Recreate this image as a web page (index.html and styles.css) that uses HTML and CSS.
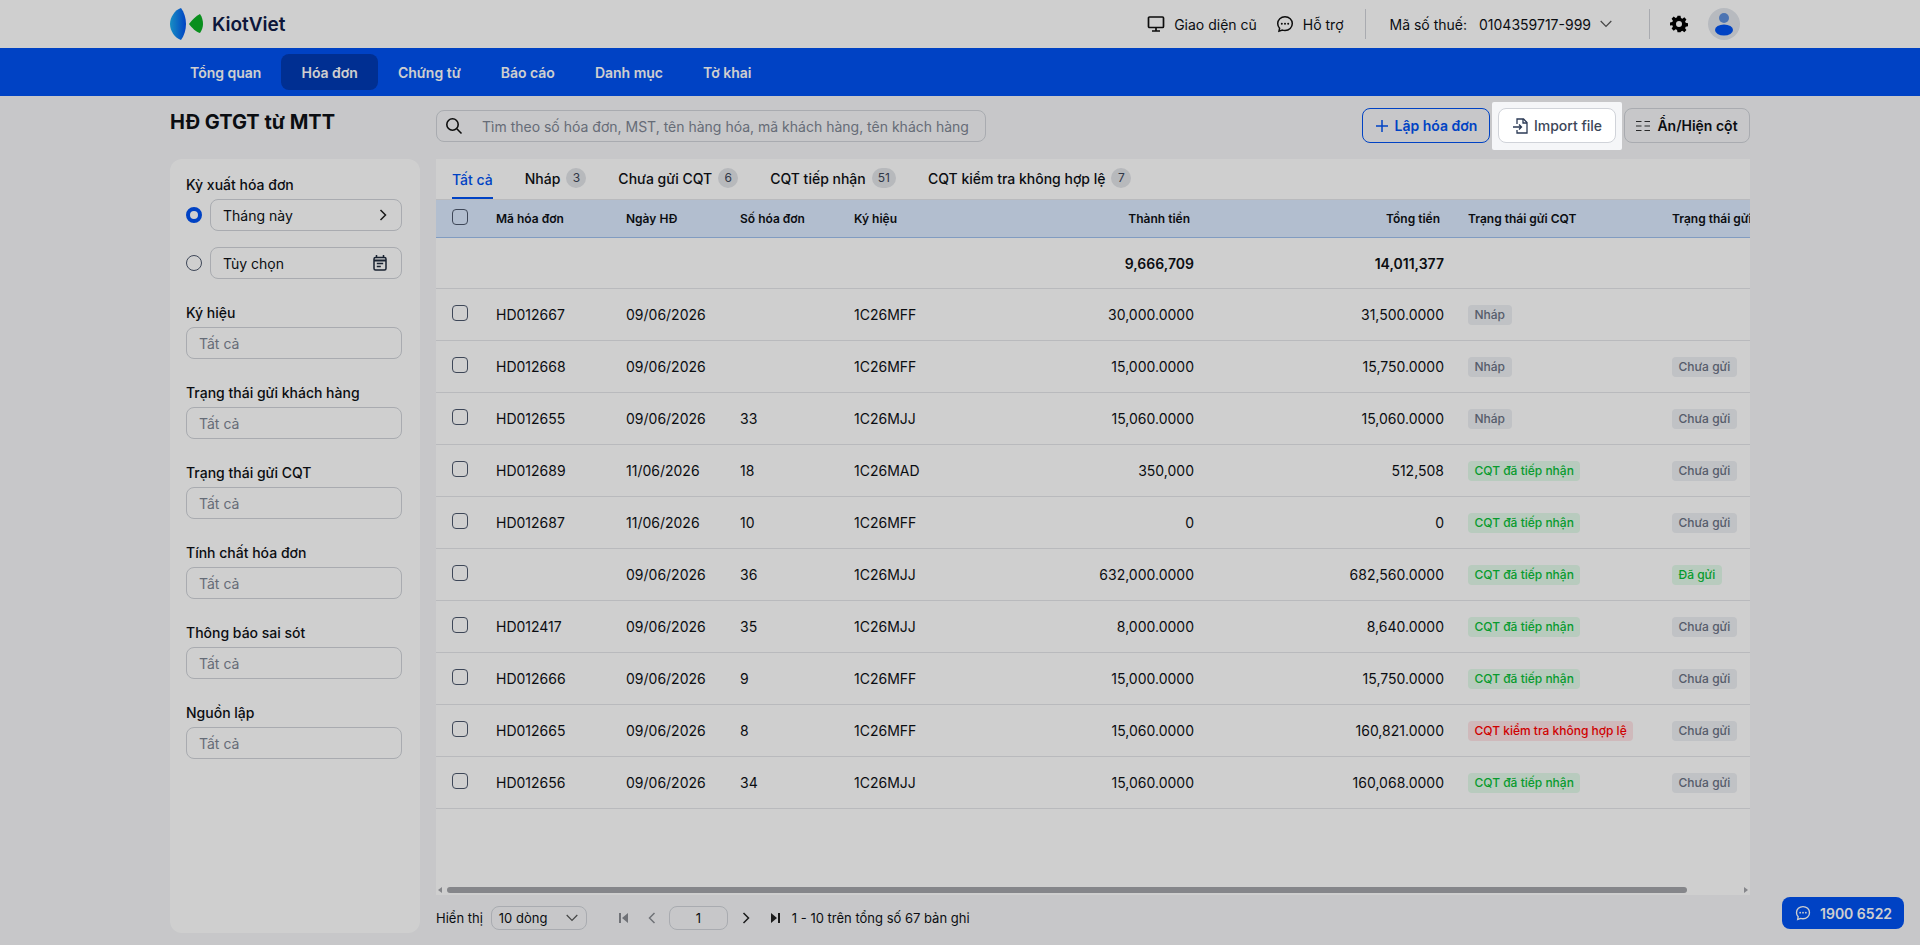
FILE: index.html
```html
<!DOCTYPE html>
<html lang="en">
<head>
    <meta charset="UTF-8">
    <meta name="viewport" content="width=device-width, initial-scale=1.0">
    <title>KiotViet - HĐ GTGT từ MTT</title>
    <link rel="stylesheet" href="styles.css">
</head>
<body>
    <header class="topbar">
        <div class="container topbar-inner">
            <div class="logo">
                <svg width="34" height="32" viewBox="0 0 34 32">
                    <defs>
                        <linearGradient id="lens" x1="0" y1="0" x2="1" y2="0">
                            <stop offset="0" stop-color="#1fb0f0"/>
                            <stop offset="1" stop-color="#0052f2"/>
                        </linearGradient>
                    </defs>
                    <path d="M11 0C5 2 0 9 0 16c0 7 5 14 11 16 3-4 5-10 5-16S14 4 11 0z" fill="url(#lens)"/>
                    <path d="M30 6c-4 2-8 6-11 10 3 4 7 8 11 9 2-3 3-6 3-9 0-4-1-7-3-10z" fill="#0cb024"/>
                </svg>
                <span class="logo-text">KiotViet</span>
            </div>
            <div class="topbar-right">
                <a class="top-link">
                    <svg class="icon-18" viewBox="0 0 18 18" fill="none" stroke="#111" stroke-width="1.700"><rect x="1.500" y="2" width="15" height="10.500" rx="1"/><path d="M9 12.500V16M5 16h8"/></svg>
                    Giao diện cũ
                </a>
                <a class="top-link">
                    <svg class="icon-18" viewBox="0 0 18 18" fill="none" stroke="#111" stroke-width="1.500"><path d="M9 1.800c-4.200 0-7.300 3-7.300 6.800 0 1.800.7 3.400 1.900 4.600L3 16.200l3.400-1.100c.8.300 1.700.4 2.600.4 4.200 0 7.300-3 7.300-6.900S13.200 1.800 9 1.800z"/><circle cx="5.800" cy="8.700" r="1" fill="#111" stroke="none"/><circle cx="9" cy="8.700" r="1" fill="#111" stroke="none"/><circle cx="12.200" cy="8.700" r="1" fill="#111" stroke="none"/></svg>
                    Hỗ trợ
                </a>
                <span class="top-divider"></span>
                <div class="tax-code">
                    <span>Mã số thuế:</span>
                    <span>0104359717-999</span>
                    <svg class="tax-chevron" width="12" height="8" viewBox="0 0 12 8" fill="none" stroke="#555" stroke-width="1.200"><path d="M.7 1l5.300 5.500L11.300 1"/></svg>
                </div>
                <span class="top-divider"></span>
                <svg class="gear" width="18" height="18" viewBox="0 0 24 24"><path fill="#000" fill-rule="evenodd" d="M10 1h4l.6 3.100 1.900.8 2.600-1.800 2.800 2.800-1.800 2.600.8 1.900 3.100.6v4l-3.100.6-.8 1.900 1.800 2.600-2.800 2.800-2.600-1.800-1.900.8L14 23h-4l-.6-3.100-1.900-.8-2.600 1.800-2.800-2.800 1.800-2.600-.8-1.900L0 14v-4l3.100-.6.8-1.900-1.800-2.600 2.800-2.800 2.600 1.800 1.900-.8L10 1zm2 7a4 4 0 1 0 0 8 4 4 0 0 0 0-8z"/></svg>
                <div class="avatar">
                    <svg width="20" height="24" viewBox="0 0 20 24"><circle cx="10" cy="6" r="5" fill="#5f8fdc"/><ellipse cx="10" cy="18" rx="9" ry="5.500" fill="#0052f2"/></svg>
                </div>
            </div>
        </div>
    </header>

    <nav class="navbar">
        <div class="container nav-inner">
            <a class="nav-item">Tổng quan</a>
            <a class="nav-item active">Hóa đơn</a>
            <a class="nav-item">Chứng từ</a>
            <a class="nav-item">Báo cáo</a>
            <a class="nav-item">Danh mục</a>
            <a class="nav-item">Tờ khai</a>
        </div>
    </nav>

    <div class="container">
        <div class="toolbar">
            <h1 class="page-title">HĐ GTGT từ MTT</h1>
            <div class="search-box">
                <svg width="18" height="18" viewBox="0 0 18 18" fill="none" stroke="#111" stroke-width="1.600"><circle cx="7.500" cy="7.500" r="5.700"/><path d="M11.800 11.800L16.500 16.500"/></svg>
                <span class="search-placeholder">Tìm theo số hóa đơn, MST, tên hàng hóa, mã khách hàng, tên khách hàng</span>
            </div>
            <div class="toolbar-actions">
                <button class="btn btn-primary">
                    <svg width="14" height="14" viewBox="0 0 14 14" fill="none" stroke="#0052f2" stroke-width="1.500"><path d="M7 1v12M1 7h12"/></svg>
                    Lập hóa đơn
                </button>
                <button class="btn btn-import">
                    <svg width="18" height="18" viewBox="0 0 18 18" fill="none" stroke="#2b3a55" stroke-width="1.300"><path d="M5 7V2h6.500L15 5.500V16H5v-3"/><path d="M11 2v4h4"/><path d="M1 10h8M7 7.500L9.500 10 7 12.500"/></svg>
                    Import file
                </button>
                <button class="btn btn-columns">
                    <svg width="14" height="12" viewBox="0 0 14 12" fill="none" stroke="#333" stroke-width="1.100"><path d="M0 1.500h5.500M8.500 1.500H14M0 6h5.500M8.500 6H14M0 10.500h5.500M8.500 10.500H14"/></svg>
                    Ẩn/Hiện cột
                </button>
            </div>
        </div>

        <div class="content">
            <aside class="sidebar">
                <div class="filter-period">
                    <label class="filter-label">Kỳ xuất hóa đơn</label>
                    <div class="period-row">
                        <span class="radio checked"></span>
                        <div class="field period-field">
                            Tháng này
                            <svg width="8" height="12" viewBox="0 0 8 12" fill="none" stroke="#222" stroke-width="1.500"><path d="M1.500 1L6.500 6 1.500 11"/></svg>
                        </div>
                    </div>
                    <div class="period-row">
                        <span class="radio"></span>
                        <div class="field period-field">
                            Tùy chọn
                            <svg width="14" height="16" viewBox="0 0 14 16" fill="none" stroke="#1f2a3d" stroke-width="1.500"><rect x="1" y="2.500" width="12" height="12.500" rx="1.500"/><path d="M1 5.500h12" stroke-width="2"/><path d="M3.500 0v3M10.500 0v3M3.800 8.500h6.400M3.800 11.500h4"/></svg>
                        </div>
                    </div>
                </div>
                <div class="filter-group">
                    <label class="filter-label">Ký hiệu</label>
                    <div class="field placeholder">Tất cả</div>
                </div>
                <div class="filter-group">
                    <label class="filter-label">Trạng thái gửi khách hàng</label>
                    <div class="field placeholder">Tất cả</div>
                </div>
                <div class="filter-group">
                    <label class="filter-label">Trạng thái gửi CQT</label>
                    <div class="field placeholder">Tất cả</div>
                </div>
                <div class="filter-group">
                    <label class="filter-label">Tính chất hóa đơn</label>
                    <div class="field placeholder">Tất cả</div>
                </div>
                <div class="filter-group">
                    <label class="filter-label">Thông báo sai sót</label>
                    <div class="field placeholder">Tất cả</div>
                </div>
                <div class="filter-group">
                    <label class="filter-label">Nguồn lập</label>
                    <div class="field placeholder">Tất cả</div>
                </div>
            </aside>

            <main class="main">
                <div class="panel">
                    <div class="tabs">
                        <a class="tab active">Tất cả</a>
                        <a class="tab">Nháp <span class="count">3</span></a>
                        <a class="tab">Chưa gửi CQT <span class="count">6</span></a>
                        <a class="tab">CQT tiếp nhận <span class="count">51</span></a>
                        <a class="tab">CQT kiểm tra không hợp lệ <span class="count">7</span></a>
                    </div>
                    <div class="table-wrap">
                        <table class="invoice-table">
                            <colgroup>
                                <col class="col-check"><col class="col-code"><col class="col-date"><col class="col-no">
                                <col class="col-symbol"><col class="col-amount"><col class="col-total"><col class="col-cqt"><col class="col-customer">
                            </colgroup>
                            <thead>
                                <tr>
                                    <th><span class="checkbox"></span></th>
                                    <th>Mã hóa đơn</th>
                                    <th>Ngày HĐ</th>
                                    <th>Số hóa đơn</th>
                                    <th>Ký hiệu</th>
                                    <th class="num">Thành tiền</th>
                                    <th class="num">Tổng tiền</th>
                                    <th>Trạng thái gửi CQT</th>
                                    <th>Trạng thái gửi khách hàng</th>
                                </tr>
                            </thead>
                            <tbody>
                                <tr class="sum-row">
                                    <td></td><td></td><td></td><td></td><td></td>
                                    <td class="num">9,666,709</td>
                                    <td class="num">14,011,377</td>
                                    <td></td><td></td>
                                </tr>
                                <tr>
                                    <td><span class="checkbox"></span></td><td>HD012667</td><td>09/06/2026</td><td></td><td>1C26MFF</td>
                                    <td class="num">30,000.0000</td><td class="num">31,500.0000</td>
                                    <td><span class="tag tag-gray">Nháp</span></td><td></td>
                                </tr>
                                <tr>
                                    <td><span class="checkbox"></span></td><td>HD012668</td><td>09/06/2026</td><td></td><td>1C26MFF</td>
                                    <td class="num">15,000.0000</td><td class="num">15,750.0000</td>
                                    <td><span class="tag tag-gray">Nháp</span></td><td><span class="tag tag-gray">Chưa gửi</span></td>
                                </tr>
                                <tr>
                                    <td><span class="checkbox"></span></td><td>HD012655</td><td>09/06/2026</td><td>33</td><td>1C26MJJ</td>
                                    <td class="num">15,060.0000</td><td class="num">15,060.0000</td>
                                    <td><span class="tag tag-gray">Nháp</span></td><td><span class="tag tag-gray">Chưa gửi</span></td>
                                </tr>
                                <tr>
                                    <td><span class="checkbox"></span></td><td>HD012689</td><td>11/06/2026</td><td>18</td><td>1C26MAD</td>
                                    <td class="num">350,000</td><td class="num">512,508</td>
                                    <td><span class="tag tag-green">CQT đã tiếp nhận</span></td><td><span class="tag tag-gray">Chưa gửi</span></td>
                                </tr>
                                <tr>
                                    <td><span class="checkbox"></span></td><td>HD012687</td><td>11/06/2026</td><td>10</td><td>1C26MFF</td>
                                    <td class="num">0</td><td class="num">0</td>
                                    <td><span class="tag tag-green">CQT đã tiếp nhận</span></td><td><span class="tag tag-gray">Chưa gửi</span></td>
                                </tr>
                                <tr>
                                    <td><span class="checkbox"></span></td><td></td><td>09/06/2026</td><td>36</td><td>1C26MJJ</td>
                                    <td class="num">632,000.0000</td><td class="num">682,560.0000</td>
                                    <td><span class="tag tag-green">CQT đã tiếp nhận</span></td><td><span class="tag tag-green">Đã gửi</span></td>
                                </tr>
                                <tr>
                                    <td><span class="checkbox"></span></td><td>HD012417</td><td>09/06/2026</td><td>35</td><td>1C26MJJ</td>
                                    <td class="num">8,000.0000</td><td class="num">8,640.0000</td>
                                    <td><span class="tag tag-green">CQT đã tiếp nhận</span></td><td><span class="tag tag-gray">Chưa gửi</span></td>
                                </tr>
                                <tr>
                                    <td><span class="checkbox"></span></td><td>HD012666</td><td>09/06/2026</td><td>9</td><td>1C26MFF</td>
                                    <td class="num">15,000.0000</td><td class="num">15,750.0000</td>
                                    <td><span class="tag tag-green">CQT đã tiếp nhận</span></td><td><span class="tag tag-gray">Chưa gửi</span></td>
                                </tr>
                                <tr>
                                    <td><span class="checkbox"></span></td><td>HD012665</td><td>09/06/2026</td><td>8</td><td>1C26MFF</td>
                                    <td class="num">15,060.0000</td><td class="num">160,821.0000</td>
                                    <td><span class="tag tag-red">CQT kiểm tra không hợp lệ</span></td><td><span class="tag tag-gray">Chưa gửi</span></td>
                                </tr>
                                <tr>
                                    <td><span class="checkbox"></span></td><td>HD012656</td><td>09/06/2026</td><td>34</td><td>1C26MJJ</td>
                                    <td class="num">15,060.0000</td><td class="num">160,068.0000</td>
                                    <td><span class="tag tag-green">CQT đã tiếp nhận</span></td><td><span class="tag tag-gray">Chưa gửi</span></td>
                                </tr>
                            </tbody>
                        </table>
                    </div>
                    <div class="scrollbar">
                        <span class="arrow-left"></span>
                        <span class="thumb"></span>
                        <span class="arrow-right"></span>
                    </div>
                </div>

                <div class="pager">
                    <span>Hiển thị</span>
                    <div class="page-size">
                        10 dòng
                        <svg width="12" height="8" viewBox="0 0 12 8" fill="none" stroke="#555" stroke-width="1.200"><path d="M.7 1l5.300 5.500L11.300 1"/></svg>
                    </div>
                    <div class="page-nav">
                        <svg class="first" width="10" height="10" viewBox="0 0 10 10" fill="#8a8d93"><path d="M0 0h2v10H0zM9 0v10L3 5z"/></svg>
                        <svg class="prev" width="8" height="12" viewBox="0 0 8 12" fill="none" stroke="#8a8d93" stroke-width="1.500"><path d="M6.500 1L1.500 6l5 5"/></svg>
                        <div class="page-input">1</div>
                        <svg class="next" width="8" height="12" viewBox="0 0 8 12" fill="none" stroke="#222" stroke-width="1.500"><path d="M1.500 1l5 5-5 5"/></svg>
                        <svg class="last" width="10" height="10" viewBox="0 0 10 10" fill="#222"><path d="M1 0v10l6-5zM8 0h2v10H8z"/></svg>
                    </div>
                    <span class="page-info">1 - 10 trên tổng số 67 bản ghi</span>
                </div>
            </main>
        </div>
    </div>

    <a class="hotline">
        <svg width="16" height="16" viewBox="0 0 18 18" fill="none" stroke="#fff" stroke-width="1.500"><path d="M9 1.800c-4.200 0-7.300 3-7.300 6.800 0 1.800.7 3.400 1.900 4.600L3 16.200l3.400-1.100c.8.300 1.700.4 2.600.4 4.200 0 7.300-3 7.300-6.900S13.200 1.800 9 1.800z"/><circle cx="5.800" cy="8.700" r="1" fill="#fff" stroke="none"/><circle cx="9" cy="8.700" r="1" fill="#fff" stroke="none"/><circle cx="12.200" cy="8.700" r="1" fill="#fff" stroke="none"/></svg>
        1900 6522
    </a>

    <!-- tour overlay: dims everything except the Import file button -->
    <div class="spotlight"></div>
</body>
</html>
```

FILE: styles.css
```css
:root {
    --primary: #0052f2;
    --primary-dark: #003ab4;
    --background: #f5f6f8;
    --card: #ffffff;
    --text: #0e1116;
    --border: #d0d3d9;
    --line: #e4e6e9;
    --muted: #7e8593;
}

* {
    margin: 0;
    padding: 0;
    box-sizing: border-box;
}

body {
    background-color: var(--background);
    color: var(--text);
    font-family: Inter, "Noto Sans", sans-serif;
    font-size: 14px;
    height: 945px;
    overflow: hidden;
}

.container {
    width: 1580px;
    margin: 0 auto;
}

/* Top bar */
.topbar {
    height: 48px;
    background-color: var(--card);
}

.topbar-inner {
    height: 100%;
    display: flex;
    align-items: center;
    justify-content: space-between;
}

.logo {
    display: flex;
    align-items: center;
    gap: 8px;
}

.logo-text {
    font-size: 19px;
    font-weight: 600;
    color: #101c48;
}

.topbar-right {
    display: flex;
    align-items: center;
    padding-right: 10px;
}

.top-link {
    display: flex;
    align-items: center;
    gap: 9px;
    margin-right: 19px;
}

.icon-18 {
    width: 18px;
    height: 18px;
}

.top-divider {
    width: 1px;
    height: 30px;
    background-color: var(--border);
    margin-left: 2px;
}

.tax-code {
    display: flex;
    align-items: center;
    gap: 12px;
    margin-left: 24px;
    margin-right: 35px;
}

.tax-chevron {
    margin-left: -3px;
}

.gear {
    margin-left: 20px;
}

.avatar {
    width: 32px;
    height: 32px;
    border-radius: 50%;
    background-color: #e2e6ec;
    margin-left: 20px;
    display: flex;
    align-items: center;
    justify-content: center;
}

/* Blue nav */
.navbar {
    height: 48px;
    background-color: var(--primary);
}

.nav-inner {
    height: 100%;
    display: flex;
    align-items: center;
}

.nav-item {
    height: 36px;
    padding: 0 20px;
    display: flex;
    align-items: center;
    border-radius: 8px;
    color: #fff;
    font-weight: 600;
}

.nav-item.active {
    background-color: var(--primary-dark);
}

/* Toolbar */
.toolbar {
    height: 63px;
    padding-top: 14px;
    display: flex;
    align-items: flex-start;
}

.page-title {
    width: 266px;
    font-size: 20px;
    font-weight: 700;
    line-height: 24px;
}

.search-box {
    width: 550px;
    height: 32px;
    border: 1px solid var(--border);
    border-radius: 8px;
    display: flex;
    align-items: center;
    padding-left: 8px;
    gap: 19px;
}

.search-placeholder {
    color: var(--muted);
}

.toolbar-actions {
    margin-left: auto;
    margin-top: -2px;
    display: flex;
    gap: 8px;
}

.btn {
    height: 35px;
    display: flex;
    align-items: center;
    justify-content: center;
    gap: 6px;
    border: 1px solid var(--border);
    border-radius: 8px;
    background: none;
    font-family: inherit;
    font-size: 14px;
    font-weight: 600;
    color: var(--text);
}

.btn-primary {
    width: 128px;
    border-color: var(--primary);
    color: var(--primary);
}

.btn-import {
    width: 118px;
    background-color: var(--card);
    color: #3c4658;
    font-weight: 500;
    gap: 4px;
}

.btn-columns {
    width: 126px;
    gap: 7px;
}

/* Content */
.content {
    display: grid;
    grid-template-columns: 250px 1314px;
    gap: 16px;
}

.sidebar {
    height: 774px;
    background-color: var(--card);
    border-radius: 12px;
    padding: 16px 18px 16px 16px;
}

.filter-label {
    display: block;
    font-weight: 500;
    line-height: 20px;
}

.filter-period {
    height: 128px;
}

.filter-period .filter-label {
    margin-bottom: 4px;
}

.period-row {
    display: flex;
    align-items: center;
    gap: 8px;
    margin-bottom: 16px;
}

.radio {
    width: 16px;
    height: 16px;
    border-radius: 50%;
    border: 1px solid #4d586d;
    flex-shrink: 0;
}

.radio.checked {
    border: 4.500px solid var(--primary);
}

.field {
    height: 32px;
    border: 1px solid var(--border);
    border-radius: 8px;
    padding: 0 12px;
    display: flex;
    align-items: center;
}

.period-field {
    flex: 1;
    justify-content: space-between;
    padding-right: 14px;
}

.placeholder {
    color: var(--muted);
}

.filter-group {
    height: 80px;
}

.filter-group .filter-label {
    margin-bottom: 4px;
}

/* Panel with tabs and table */
.panel {
    height: 736px;
    background-color: var(--card);
    display: flex;
    flex-direction: column;
}

.tabs {
    height: 40px;
    display: flex;
    flex-shrink: 0;
}

.tab {
    display: flex;
    align-items: center;
    gap: 6px;
    margin-left: 16px;
    margin-right: 16px;
    padding-bottom: 2px;
    font-weight: 500;
}

.tab.active {
    color: var(--primary);
    border-bottom: 2px solid var(--primary);
    padding-top: 2px;
    padding-bottom: 0;
}

.count {
    min-width: 20px;
    height: 20px;
    padding: 0 6px;
    border-radius: 10px;
    background-color: #e2e4e8;
    color: #3c4658;
    font-size: 12px;
    font-weight: 400;
    line-height: 20px;
    text-align: center;
}

.table-wrap {
    flex: 1;
    overflow: hidden;
}

.invoice-table {
    width: 1384px;
    table-layout: fixed;
    border-collapse: collapse;
}

.col-check { width: 48px; }
.col-code { width: 130px; }
.col-date { width: 114px; }
.col-no { width: 114px; }
.col-symbol { width: 158px; }
.col-amount { width: 206px; }
.col-total { width: 250px; }
.col-cqt { width: 204px; }
.col-customer { width: 160px; }

.invoice-table th {
    height: 38px;
    background-color: #dcebff;
    border-top: 1px solid var(--line);
    border-bottom: 1px solid #9fc0ee;
    padding: 0 12px;
    font-size: 12px;
    font-weight: 600;
    text-align: left;
    white-space: nowrap;
    overflow: hidden;
}

.invoice-table td {
    height: 52px;
    border-bottom: 1px solid var(--line);
    padding: 0 12px;
    white-space: nowrap;
    overflow: hidden;
}

.invoice-table th:first-child,
.invoice-table td:first-child {
    padding: 0 0 4px 16px;
}

.invoice-table th.num,
.invoice-table td.num {
    text-align: right;
}

.invoice-table th.num {
    padding-right: 16px;
}

.sum-row td {
    height: 51px;
    font-weight: 600;
}

.checkbox {
    display: block;
    width: 16px;
    height: 16px;
    border: 1px solid #4d586d;
    border-radius: 4px;
}

.tag {
    display: inline-block;
    height: 20px;
    padding: 0 6.500px;
    border-radius: 4px;
    font-size: 12px;
    font-weight: 500;
    line-height: 20px;
    vertical-align: middle;
}

.tag-gray {
    background-color: #edeff3;
    color: #6a7284;
}

.tag-green {
    background-color: #e3fbea;
    color: #0abf39;
}

.tag-red {
    background-color: #ffe4e7;
    color: #ff0000;
}

/* Fake scrollbar at the bottom of the panel */
.scrollbar {
    height: 10px;
    flex-shrink: 0;
    display: flex;
    align-items: center;
    padding: 0 2px;
}

.thumb {
    width: 1240px;
    height: 6px;
    margin-left: 5px;
    background-color: #a4a5aa;
    border-radius: 3px;
}

.arrow-left {
    border: 3px solid transparent;
    border-right: 4px solid #a4a5aa;
    border-left: 0;
    height: 6px;
}

.arrow-right {
    border: 3px solid transparent;
    border-left: 4px solid #a4a5aa;
    border-right: 0;
    height: 6px;
    margin-left: auto;
}

/* Pager */
.pager {
    height: 38px;
    padding-top: 7px;
    display: flex;
    align-items: center;
    font-size: 13px;
}

.page-size {
    width: 96px;
    height: 24px;
    margin-left: 8px;
    padding: 0 8px 0 7px;
    border: 1px solid var(--border);
    border-radius: 8px;
    display: flex;
    align-items: center;
    justify-content: space-between;
}

.page-nav {
    display: flex;
    align-items: center;
    margin-left: 32px;
}

.prev {
    margin-left: 19px;
}

.page-input {
    width: 59px;
    height: 24px;
    margin-left: 13px;
    border: 1px solid var(--border);
    border-radius: 8px;
    text-align: center;
    line-height: 22px;
}

.next {
    margin-left: 14px;
}

.last {
    margin-left: 20px;
}

.page-info {
    margin-left: 12px;
}

/* Hotline button, floats over the page */
.hotline {
    position: fixed;
    left: 1782px;
    top: 897px;
    width: 122px;
    height: 32px;
    border-radius: 8px;
    background-color: var(--primary);
    color: #fff;
    font-weight: 600;
    display: flex;
    align-items: center;
    padding-left: 13px;
    gap: 9px;
}

/* Tour overlay */
.spotlight {
    position: fixed;
    left: 1492px;
    top: 102px;
    width: 130px;
    height: 48px;
    border-radius: 2px;
    box-shadow: 0 0 0 3000px rgba(0, 0, 0, 0.19);
}
```
